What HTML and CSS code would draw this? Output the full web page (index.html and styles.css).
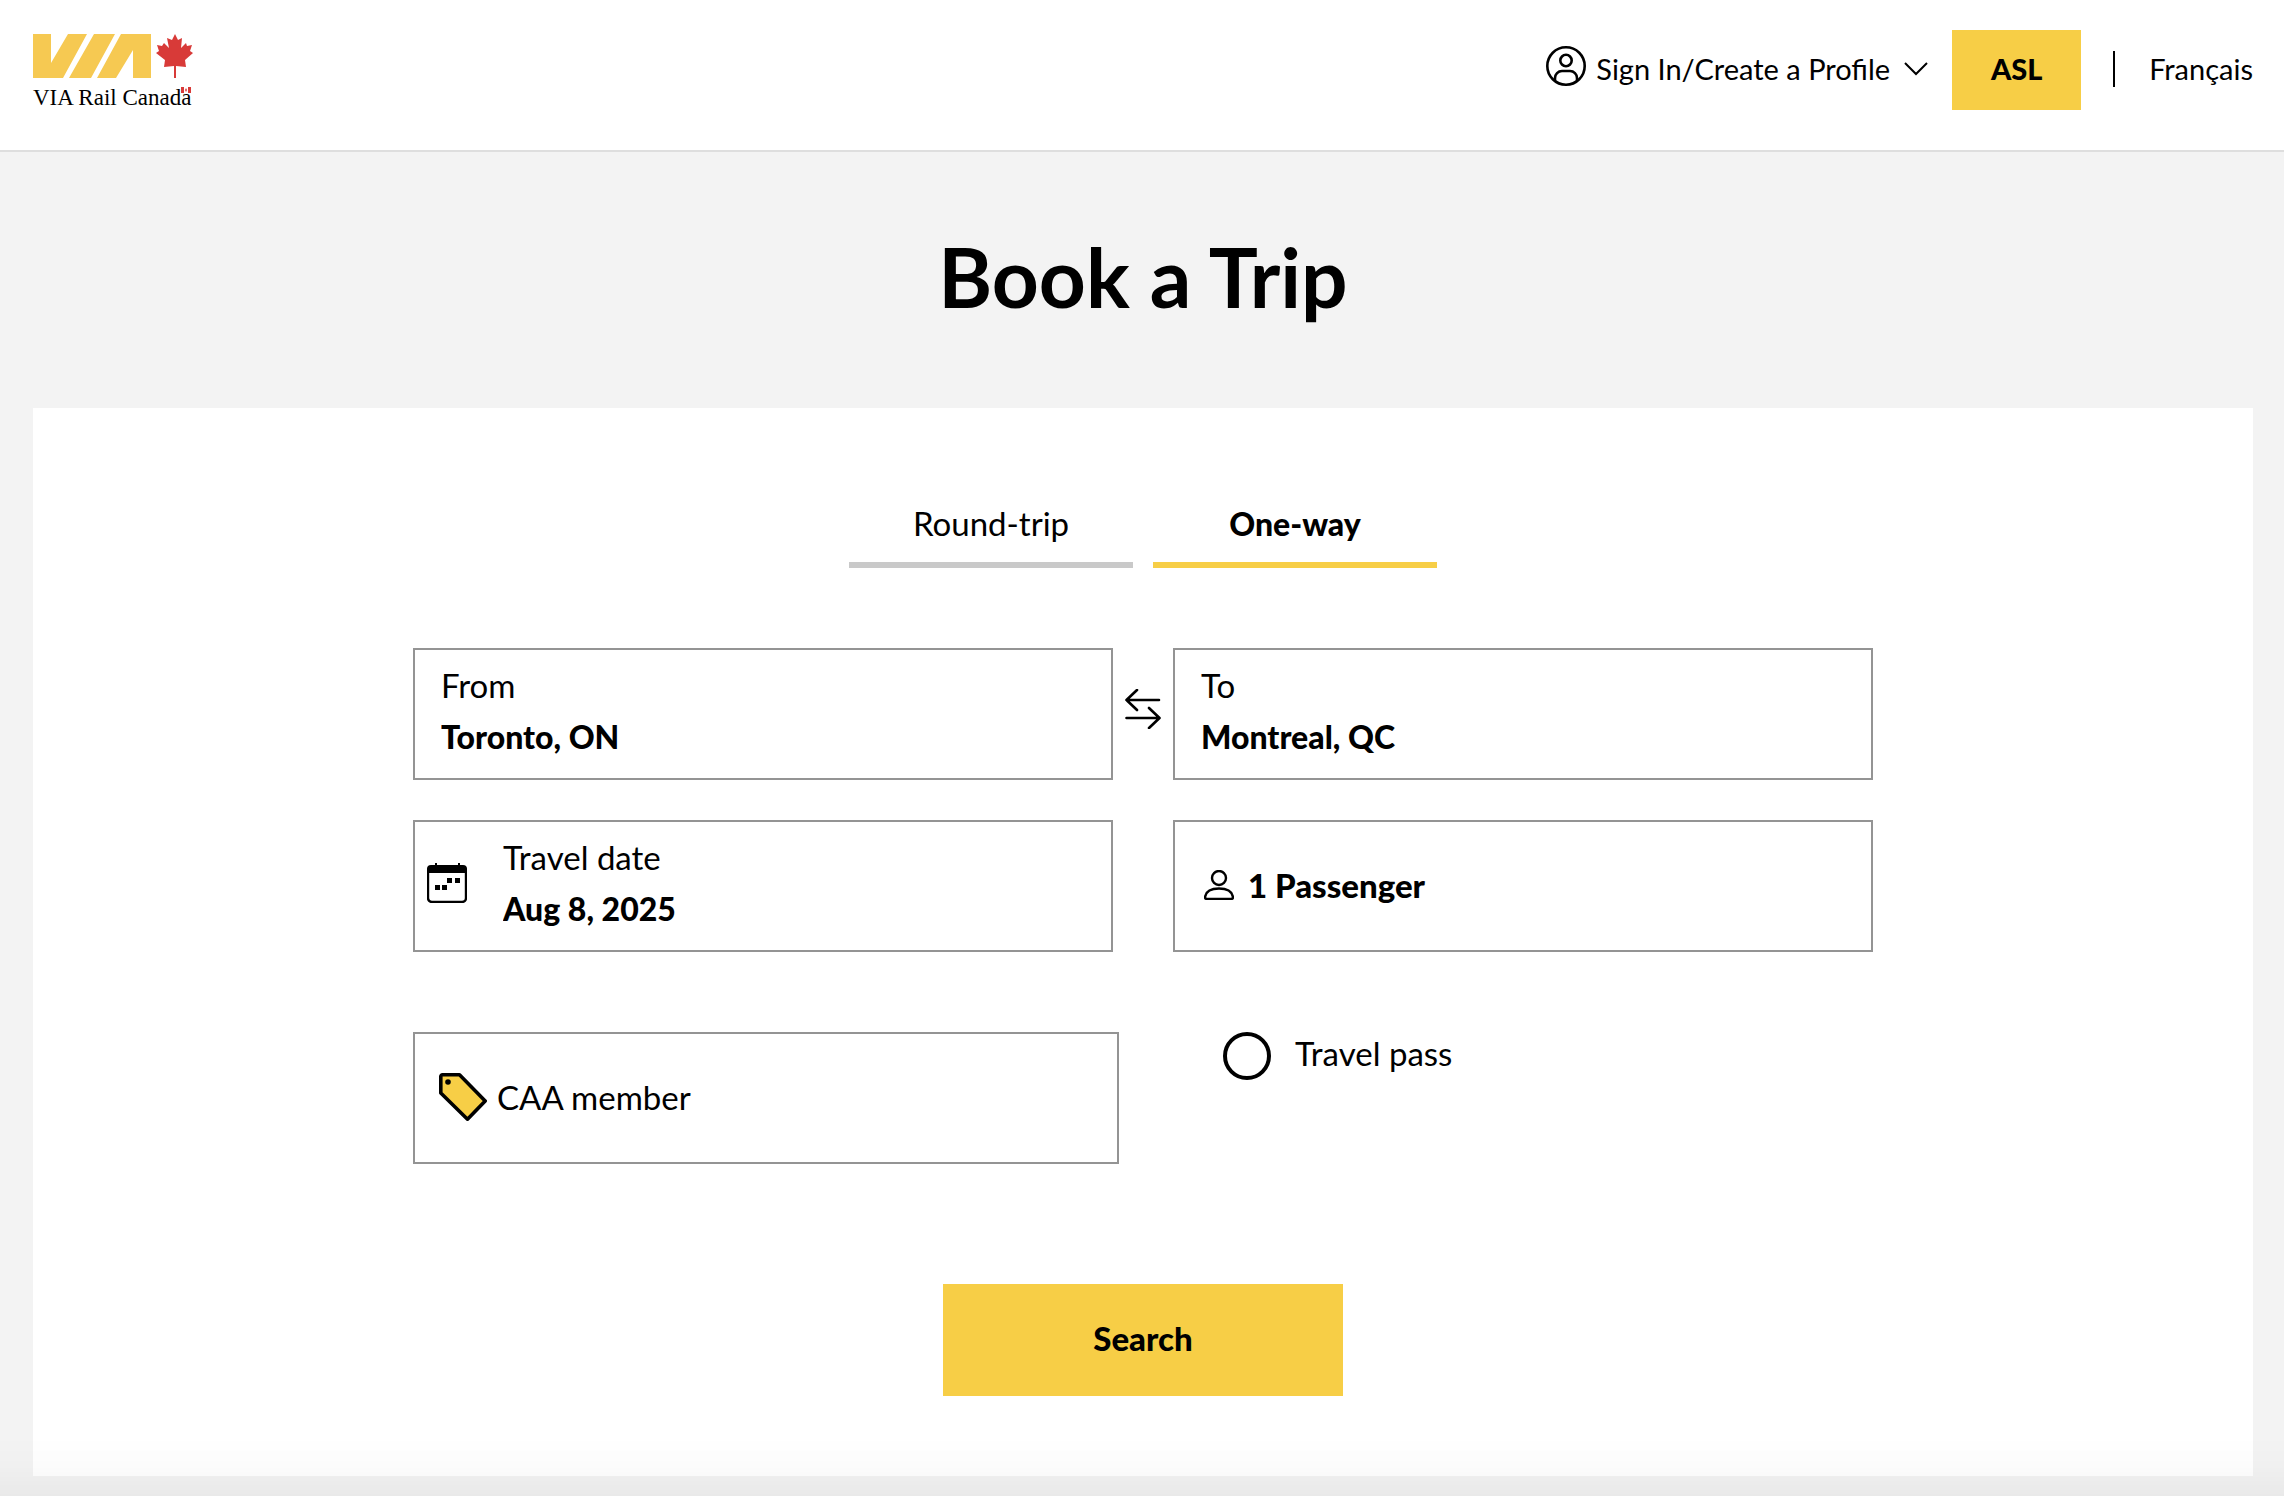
FILE: index.html
```
<!DOCTYPE html>
<html lang="en">
<head>
<meta charset="utf-8">
<meta name="viewport" content="width=device-width, initial-scale=1">
<title>Book a Trip | VIA Rail</title>
<link rel="stylesheet" href="styles.css">
</head>
<body>
<header class="site-header">
  <a class="logo" href="#" aria-label="VIA Rail Canada">
    <svg class="logo-mark" viewBox="0 0 160 44" aria-hidden="true">
      <path class="logo-yellow" d="M0 0H18V29L35 0H54L30 44H0ZM61 0H82L58 44H36ZM88 0H118V44H100V16L83 44H64Z"/>
      <path class="logo-red" d="M142 0L145 6L149 4L148 14L153 9L154 12L159 11L157 17L160 19L152 26L153 33L143 32V44H141V32L131 33L132 26L123 19L126 17L124 11L129 12L131 9L136 14L134 4L139 6Z"/>
    </svg>
    <span class="wordmark">VIA Rail Canada
      <svg class="flag" viewBox="0 0 10 6" aria-hidden="true"><path class="logo-red" d="M0 0H3V6H0ZM7 0H10V6H7ZM5 1L6 3L5 5L4 3Z"/></svg>
    </span>
  </a>
  <nav class="header-nav">
    <button class="account" type="button">
      <svg class="account-icon" viewBox="0 0 40 40" aria-hidden="true"><circle cx="20" cy="20" r="18.7"/><circle cx="20" cy="14.5" r="5.7"/><path d="M9 35v-3a7 7 0 0 1 7-7h8a7 7 0 0 1 7 7v3"/></svg>
      <span>Sign In/Create a Profile</span>
      <svg class="chevron" viewBox="0 0 24 14" aria-hidden="true"><path d="M1 1L12 12L23 1"/></svg>
    </button>
    <button class="asl" type="button">ASL</button>
    <a class="language" href="#" lang="fr">Français</a>
  </nav>
</header>
<main class="page">
  <h1 class="title">Book a Trip</h1>
  <form class="card">
    <div class="tabs" role="tablist">
      <button class="tab" type="button" role="tab" aria-selected="false">Round-trip</button>
      <button class="tab tab-active" type="button" role="tab" aria-selected="true">One-way</button>
    </div>
    <div class="fields">
      <div class="row">
        <div class="field">
          <label class="field-label" for="from">From</label>
          <input class="field-value" id="from" type="text" value="Toronto, ON">
        </div>
        <button class="swap" type="button" aria-label="Swap stations">
          <svg class="swap-icon" viewBox="0 0 36 40" aria-hidden="true"><path d="M34 11H1.500M12 1L1.500 11L12 21M1.500 29H34M24 19L34.500 29L24 39"/></svg>
        </button>
        <div class="field">
          <label class="field-label" for="to">To</label>
          <input class="field-value" id="to" type="text" value="Montreal, QC">
        </div>
      </div>
      <div class="row">
        <div class="field field-date">
          <svg class="calendar" viewBox="0 0 40 40" aria-hidden="true"><rect class="calendar-frame" x="1" y="4" width="38" height="35" rx="4"/><path d="M0 10V6a4 4 0 0 1 4-4H8V0h2v2H31V0h2v2h3a4 4 0 0 1 4 4v4zM20 15h5v5h-5zM28 15h5v5h-5zM8 22h5v5H8zM15 22h5v5h-5z"/></svg>
          <div class="field-body">
            <label class="field-label" for="date">Travel date</label>
            <input class="field-value" id="date" type="text" value="Aug 8, 2025">
          </div>
        </div>
        <button class="field field-button field-passenger" type="button">
          <svg class="person" viewBox="0 0 30 30" aria-hidden="true"><circle cx="15" cy="8" r="7"/><path d="M3 29h24q2 0 2-2C28 21 22 18.500 15 18.500S2 21 1 27q0 2 2 2z"/></svg>
          <span>1 Passenger</span>
        </button>
      </div>
      <div class="extras">
        <button class="field field-button field-member" type="button">
          <svg class="tag" viewBox="0 0 48 48" aria-hidden="true"><path d="M3.500 1.800H20.500L46.200 28L28.500 46.200L1.800 20V3.500a1.700 1.700 0 0 1 1.700-1.700z"/><circle cx="9" cy="9" r="2.800"/></svg>
          <span>CAA member</span>
        </button>
        <label class="pass"><input class="pass-input" type="radio" name="pass"><span class="pass-text">Travel pass</span></label>
      </div>
    </div>
    <button class="search" type="submit">Search</button>
  </form>
</main>
</body>
</html>
```
FILE: styles.css
```
* { box-sizing: border-box; }

body {
  margin: 0;
  background: #f3f3f3;
  color: #000;
  font-family: Lato, "Liberation Sans", sans-serif;
  font-size: 33px;
}

/* Soft shade along the bottom edge of the window */
body::after {
  content: "";
  position: fixed;
  inset: auto 0 0;
  height: 60px;
  background: linear-gradient(transparent, rgba(0, 0, 0, 0.01) 50%, rgba(0, 0, 0, 0.04));
  pointer-events: none;
}

button, input { font: inherit; color: inherit; margin: 0; }
button { border: 0; background: none; padding: 0; cursor: pointer; }
svg { display: block; flex: none; fill: none; stroke: #000; }

.site-header {
  display: flex;
  justify-content: space-between;
  align-items: flex-start;
  height: 152px;
  padding: 30px 31px 0 33px;
  background: #fff;
  border-bottom: 2px solid #dedede;
}

.logo { padding-top: 4px; color: #000; text-decoration: none; }
.logo-mark { width: 160px; height: 44px; stroke: none; }
.logo-yellow { fill: #f6c952; }
.logo-red { fill: #d83a38; }
.wordmark {
  display: block;
  position: relative;
  width: 158px;
  margin-top: 7px;
  font: 23px/26px "Liberation Serif", serif;
  white-space: nowrap;
}
.flag { position: absolute; top: 2px; right: 0; width: 10px; height: 6px; stroke: none; }

.header-nav { display: flex; align-items: center; font-size: 29px; line-height: 78px; }
.account { display: flex; align-items: center; gap: 10px; height: 78px; }
.account-icon { width: 40px; height: 40px; margin-bottom: 6px; stroke-width: 2.6; }
.chevron { width: 24px; height: 14px; margin-left: 4px; stroke-width: 2; }
.asl {
  width: 129px;
  height: 80px;
  margin-left: 24px;
  padding-bottom: 2px;
  background: #f7ce46;
  font-weight: 900;
}
.account, .language { margin-bottom: 2px; }
.language { display: flex; align-items: center; color: #000; text-decoration: none; }
.language::before { content: ""; width: 2px; height: 36px; margin: 0 34px 0 32px; background: #000; }

.page { padding: 0 31px 20px 33px; }
.title {
  margin: 0;
  padding: 76px 0 84px;
  font-size: 82px;
  line-height: 96px;
  font-weight: 700;
  text-align: center;
}

.card {
  display: flex;
  flex-direction: column;
  align-items: center;
  padding: 80px 32px;
  background: #fff;
}

.tabs { display: flex; gap: 20px; }
.tab { width: 284px; height: 80px; padding-bottom: 4px; border-bottom: 6px solid #c9c9c9; }
.tab-active { border-color: #f7ce46; font-size: 32px; font-weight: 900; }

.fields { width: 100%; max-width: 1460px; margin-top: 80px; }
.row { display: grid; grid-template-columns: 1fr 1fr; gap: 60px; margin-bottom: 40px; position: relative; }

.field { height: 132px; border: 2px solid #949494; padding: 10px 26px; line-height: 51px; background: #fff; }
.field-label { display: block; }
.field-value {
  display: block;
  width: 100%;
  height: 51px;
  padding: 0;
  border: 0;
  background: none;
  font-size: 32px;
  font-weight: 900;
  line-height: 51px;
}
.swap { position: absolute; left: 50%; top: 41px; width: 36px; height: 40px; margin-left: -18px; }
.swap-icon { width: 36px; height: 40px; stroke-width: 2.6; stroke-linecap: round; stroke-linejoin: round; }

.field-date { display: flex; gap: 36px; padding-left: 12px; }
.field-body { flex: 1; }
.calendar { width: 40px; height: 40px; margin-top: 31px; fill: #000; stroke: none; }
.calendar-frame { fill: none; stroke: #000; stroke-width: 2.4; }

.field-button { display: flex; align-items: center; padding-bottom: 12px; text-align: left; }
.field-passenger { gap: 14px; padding-left: 29px; font-weight: 900; }
.person { width: 30px; height: 30px; stroke-width: 2.4; }
.field-member { gap: 10px; padding-left: 24px; }
.tag { width: 48px; height: 48px; stroke-width: 3.6; stroke-linejoin: round; fill: #f7ce46; }
.tag circle { fill: #000; stroke: none; }

.extras { display: grid; grid-template-columns: 706px 1fr; gap: 104px; margin-top: 80px; }
.pass { display: flex; align-items: center; gap: 24px; height: 48px; }
.pass-text { padding-bottom: 6px; }
.pass-input {
  appearance: none;
  width: 48px;
  height: 48px;
  border: 4px solid #000;
  border-radius: 50%;
}

.search {
  width: 400px;
  height: 112px;
  margin-top: 120px;
  padding-bottom: 4px;
  background: #f7ce46;
  font-weight: 900;
}
```
